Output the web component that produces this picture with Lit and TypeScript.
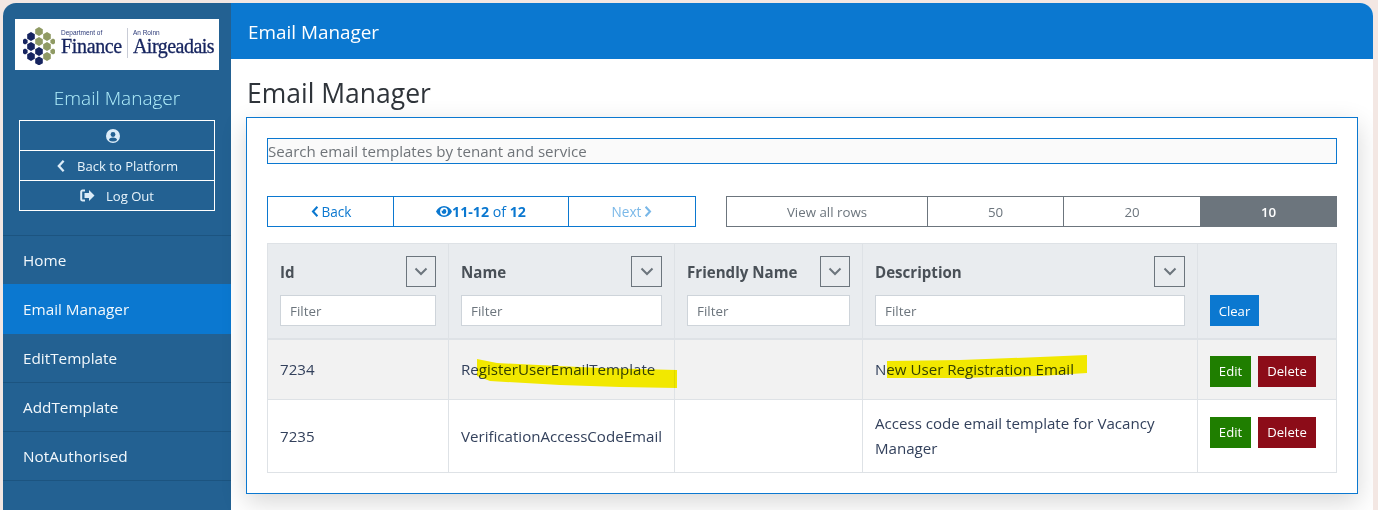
import { LitElement, html, css, svg } from "lit";
import { customElement } from "lit/decorators.js";

const D = "#16245f";
const O = "#8f9a63";
const hexes: [number, number, string, number][] = [
  [16, 4.5, O, 4.4], [8, 9.5, D, 4.4], [24, 9.5, O, 4.4], [16, 14.5, O, 4.4], [8, 19.5, D, 4.4],
  [24, 19.5, O, 4.4], [16, 24.5, D, 4.4], [8, 29.5, D, 4.4], [24, 29.5, O, 4.4], [16, 34, D, 4.4],
  [2, 14.5, D, 3], [2, 24.5, D, 3], [30, 14.5, O, 3], [30, 24.5, O, 3],
];

const chevL = html`<svg class="chev" viewBox="0 0 10 16"><path d="M8 2 2.500 8 8 14" fill="none" stroke="currentColor" stroke-width="2.600"/></svg>`;
const chevR = html`<svg class="chev" viewBox="0 0 10 16"><path d="M2 2 7.500 8 2 14" fill="none" stroke="currentColor" stroke-width="2.600"/></svg>`;

@customElement("app-root")
export class AppRoot extends LitElement {
  static styles = css`
    :host { display: block; width: 1378px; height: 510px; overflow: hidden; background: #f3e7e3; font-family: "Open Sans", "Noto Sans", sans-serif; color: #33415c; }
    * { box-sizing: border-box; }
    .shell { display: flex; height: 507px; margin: 3px 5px 0 3px; border-radius: 13px 13px 0 0; overflow: hidden; background: #fff; }
    .side { width: 228px; flex: none; background: #236192; color: #fff; display: flex; flex-direction: column; }
    .logo { margin: 16px 12px 0; width: 204px; height: 51px; background: #fff; display: flex; align-items: center; padding: 3px 0 0 8px; color: #16245f; font-family: "Liberation Serif", serif; }
    .logo svg { width: 32px; height: 38px; flex: none; }
    .lt { display: flex; flex-direction: column; line-height: 1; white-space: nowrap; padding-bottom: 9px; }
    .lt small { font: 6.500px/7px "Liberation Sans", sans-serif; color: #2c3a78; margin-bottom: 1px; }
    .lt b { font-size: 20px; line-height: 18px; font-weight: 400; -webkit-text-stroke: .3px #16245f; letter-spacing: -.35px; }
    .lt1 { margin-left: 6px; }
    .lt2 b { letter-spacing: -.5px; }
    .lsep { width: 1px; height: 30px; background: #c9ccd6; margin: 0 5px 6px 5px; }
    .app { margin-top: 15px; text-align: center; font-size: 19px; line-height: 26px; font-weight: 300; color: #b0eefb; }
    .ubox { margin: 9px 16px 0; border: 1px solid #fff; display: flex; flex-direction: column; }
    .ubox div { height: 30px; display: flex; align-items: center; justify-content: center; gap: 11px; font-size: 13.100px; color: #e8f4fb; border-top: 1px solid #fff; }
    .ubox div:first-child { border-top: 0; height: 29px; padding-right: 8px; }
    .ubox svg { color: #dcecf8; display: block; }
    .ubox .chev { width: 10px; height: 14px; }
    nav { margin-top: 24px; display: flex; flex-direction: column; border-top: 1px solid #1c5480; }
    nav a { height: 49px; display: flex; align-items: center; padding-left: 20px; font-size: 15.300px; color: #f2f8fc; border-bottom: 1px solid #1c5480; }
    nav a.on { background: #0b78d0; border-bottom-color: #0b78d0; height: 50px; margin-top: -1px; }
    main { flex: 1; min-width: 0; display: flex; flex-direction: column; }
    .bar { height: 56px; flex: none; background: #0b78d0; color: #fff; display: flex; align-items: center; padding: 1px 0 0 17px; font-size: 18.900px; }
    h1 { margin: 16px 0 0 16px; font-size: 26.500px; line-height: 36px; font-weight: 400; color: #2f343a; }
    .card { position: relative; margin: 6px 15px 0; height: 377px; border: 1px solid #0b78d0; background: #fff; padding: 20px 20px 0; box-shadow: 0 8px 24px rgba(0,0,0,.16); }
    .search { height: 26px; border: 1px solid #0b78d0; background: #fafafa; color: #6f7479; font-size: 15.100px; display: flex; align-items: center; padding-left: 0; white-space: nowrap; }
    .tools { margin-top: 32px; display: flex; height: 31px; justify-content: space-between; }
    .pager { display: grid; grid-template-columns: 125px 175px 127px; width: 429px; border: 1px solid #0b78d0; color: #0b78d0; font-size: 13.600px; }
    .pager > div { display: flex; align-items: center; justify-content: center; gap: 3px; border-left: 1px solid #0b78d0; }
    .pager > div:first-child { border-left: 0; padding-left: 1px; }
    .pager .off { color: #7ab8e8; }
    .pager .chev { width: 8px; height: 13px; }
    .pager .seen { gap: 0; font-size: 14.200px; }
    .pager b { font-weight: 700; }
    .sizes { width: 611px; display: grid; grid-template-columns: 200px 136px 137px 136px; border: 1px solid #6c757d; color: #6c757d; font-size: 13.300px; }
    .sizes div { display: flex; align-items: center; justify-content: center; border-left: 1px solid #6c757d; }
    .sizes div:first-child { border-left: 0; }
    .sizes .on { background: #6c757d; color: #fff; font-weight: 600; }
    table { margin-top: 16px; width: 1069px; table-layout: fixed; border-collapse: collapse; font-size: 15.100px; }
    col:nth-child(1) { width: 181px; }
    col:nth-child(2) { width: 226px; }
    col:nth-child(3) { width: 188px; }
    col:nth-child(4) { width: 335px; }
    col:nth-child(5) { width: 139px; }
    th, td { border: 1px solid #dee2e6; padding: 0 12px; vertical-align: middle; text-align: left; }
    thead th { height: 95px; background: #e9ecef; color: #495057; border-bottom-width: 2px; vertical-align: top; padding-top: 11px; }
    .h { display: flex; align-items: center; justify-content: space-between; height: 32px; font-size: 15.100px; font-weight: 700; white-space: nowrap; }
    .h > span:first-child { padding-top: 2px; }
    .dd { width: 31px; height: 31px; border: 1px solid #6c757d; display: flex; align-items: center; justify-content: center; color: #6c757d; flex: none; }
    .dd.n { width: 30px; }
    .dd svg { width: 14px; height: 9px; }
    .f { margin-top: 8px; height: 31px; border: 1px solid #ced4da; background: #fff; color: #6c757d; font-size: 13.400px; font-weight: 400; display: flex; align-items: center; padding-left: 9px; }
    .clear { margin-top: 40px; }
    .b { display: inline-flex; height: 31px; align-items: center; justify-content: center; color: #fff; font-size: 13.100px; font-weight: 400; }
    .clear .b { width: 49px; background: #0b78d0; }
    .edit { width: 41px; background: #1f7e00; }
    .del { width: 58px; background: #8c0c18; margin-left: 7px; }
    tbody tr:nth-child(1) { height: 61px; background: #f2f2f2; }
    tbody tr:nth-child(2) { height: 73px; }
    td { line-height: 25px; color: #33415c; }
    td.nw { white-space: nowrap; }
    td.act div { display: flex; }
    .r1 td.act div { margin-top: 4px; }
    .r2 td.act div { margin-top: -8px; }
    .hl { position: absolute; left: 0; top: 0; width: 1110px; height: 375px; pointer-events: none; mix-blend-mode: multiply; }
  `;

  private logo() {
    return html`<div class="logo">
      <svg viewBox="0 0 32 38">${hexes.map(([x, y, c, r]) => svg`<polygon fill=${c} transform="translate(${x} ${y}) scale(${r / 4.4})" points="0,-4.400 3.800,-2.200 3.800,2.200 0,4.400 -3.800,2.200 -3.800,-2.200"/>`)}</svg>
      <div class="lt lt1"><small>Department of</small><b>Finance</b></div>
      <div class="lsep"></div>
      <div class="lt lt2"><small>An Roinn</small><b>Airgeadais</b></div>
    </div>`;
  }

  private head(t: string, narrow = false) {
    return html`<th><div class="h"><span>${t}</span><span class="dd ${narrow ? "n" : ""}"><svg viewBox="0 0 14 9"><path d="M1.500 1.500 7 7l5.500-5.500" fill="none" stroke="currentColor" stroke-width="2"/></svg></span></div><div class="f">Filter</div></th>`;
  }

  render() {
    const acts = html`<div><span class="b edit">Edit</span><span class="b del">Delete</span></div>`;
    return html`<div class="shell">
      <aside class="side">
        ${this.logo()}
        <div class="app">Email Manager</div>
        <div class="ubox">
          <div><svg width="14" height="14" viewBox="0 0 14 14"><circle cx="7" cy="7" r="7" fill="currentColor"/><circle cx="7" cy="5.500" r="2.400" fill="#236192"/><path d="M2.800 11c.8-1.700 2.300-2.400 4.200-2.400s3.400.7 4.200 2.400A6 6 0 0 1 7 12.600 6 6 0 0 1 2.800 11Z" fill="#236192"/></svg></div>
          <div>${chevL}<span>Back to Platform</span></div>
          <div><svg width="15" height="13" viewBox="0 0 15 13"><path d="M5 1.500H2.500A1.300 1.300 0 0 0 1.200 2.800v7.400a1.300 1.300 0 0 0 1.300 1.300H5" fill="none" stroke="currentColor" stroke-width="2"/><path d="M9 1v3H4.500v5H9v3l5.500-5.500Z" fill="currentColor"/></svg><span>Log Out</span></div>
        </div>
        <nav><a>Home</a><a class="on">Email Manager</a><a>EditTemplate</a><a>AddTemplate</a><a>NotAuthorised</a></nav>
      </aside>
      <main>
        <div class="bar">Email Manager</div>
        <h1>Email Manager</h1>
        <section class="card">
          <div class="search">Search email templates by tenant and service</div>
          <div class="tools">
            <div class="pager">
              <div>${chevL}<span>Back</span></div>
              <div class="seen"><svg width="16" height="11" viewBox="0 0 16 11"><path fill-rule="evenodd" fill="currentColor" d="M8 0c3.500 0 6.400 2.300 8 5.500C14.400 8.700 11.500 11 8 11S1.600 8.700 0 5.500C1.600 2.300 4.500 0 8 0Zm0 1.600a3.900 3.900 0 1 0 0 7.800 3.900 3.900 0 0 0 0-7.800Zm0 1.500a2.400 2.400 0 1 1-2.400 2.400c0-.3.100-.6.200-.9a1.200 1.200 0 0 0 1.600-1.300c.2-.1.400-.2.600-.2Z"/></svg><span><b>11-12</b> of <b>12</b></span></div>
              <div class="off"><span>Next</span>${chevR}</div>
            </div>
            <div class="sizes"><div>View all rows</div><div>50</div><div>20</div><div class="on">10</div></div>
          </div>
          <table>
            <colgroup><col/><col/><col/><col/><col/></colgroup>
            <thead><tr>
              ${this.head("Id", true)}${this.head("Name")}${this.head("Friendly Name", true)}${this.head("Description")}
              <th><div class="clear"><span class="b">Clear</span></div></th>
            </tr></thead>
            <tbody>
              <tr class="r1"><td>7234</td><td class="nw">RegisterUserEmailTemplate</td><td></td><td>New User Registration Email</td><td class="act">${acts}</td></tr>
              <tr class="r2"><td>7235</td><td class="nw">VerificationAccessCodeEmail</td><td></td><td>Access code email template for Vacancy Manager</td><td class="act">${acts}</td></tr>
            </tbody>
          </table>
          <svg class="hl" viewBox="0 0 1110 375">
            <path fill="#fff500" d="M230 241 L250 245 L353 250 L430 252 L430 270 L373 269 L313 267 L243 263 L230 258 Z"/>
            <path fill="#fff500" d="M640 243 L713 242 L793 239 L840 237 L840 255 L793 258 L713 260 L640 260 Z"/>
          </svg>
        </section>
      </main>
    </div>`;
  }
}
